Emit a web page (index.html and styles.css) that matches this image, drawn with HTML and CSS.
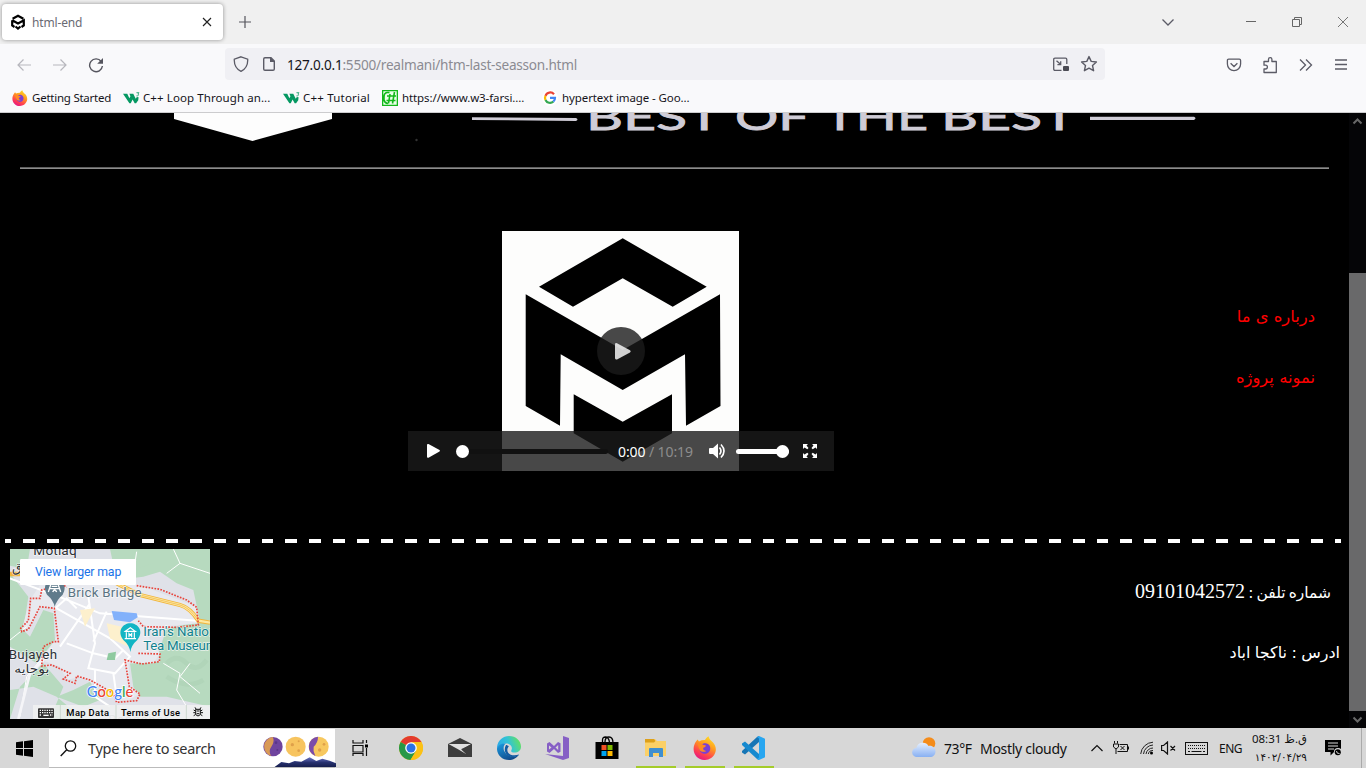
FILE: index.html
```html
<!DOCTYPE html>
<html lang="en">
<head>
<meta charset="utf-8">
<title>html-end</title>
<link rel="stylesheet" href="styles.css">
</head>
<body>
<svg width="0" height="0" class="defs">
  <defs>
    <linearGradient id="fx" x1="0.8" y1="0" x2="0.3" y2="1"><stop offset="0" stop-color="#ffe226"/><stop offset=".4" stop-color="#ff9a1f"/><stop offset=".75" stop-color="#ff4050"/><stop offset="1" stop-color="#e31587"/></linearGradient>
    <linearGradient id="edgeTop" x1="0" y1="0.6" x2="1" y2="0.3"><stop offset="0" stop-color="#2aa7e8"/><stop offset=".5" stop-color="#32c3d6"/><stop offset="1" stop-color="#66e25a"/></linearGradient>
    <linearGradient id="edgeLow" x1="0" y1="0" x2="0.6" y2="1"><stop offset="0" stop-color="#1b9de2"/><stop offset="1" stop-color="#114a8b"/></linearGradient>
    <linearGradient id="cloud" x1="0" y1="0" x2="0" y2="1"><stop offset="0" stop-color="#e4efff"/><stop offset="1" stop-color="#88b0f2"/></linearGradient>
    <linearGradient id="hills" x1="0" y1="0" x2="0" y2="1"><stop offset="0" stop-color="#6a74c4"/><stop offset=".5" stop-color="#27316f"/><stop offset="1" stop-color="#131b48"/></linearGradient>
    <symbol id="firefox" viewBox="0 0 24 24">
      <path d="M3 5.500 4.600 3.400 6 5.400C8 4.200 10 3.800 12 4 12.500 2.500 14 1 15.500.2 16 3 18 4.400 20 6.400 22.500 9 23.600 13 22.300 16.600 20.600 21.300 16.400 24 12 24 5.500 24.200.6 19.200.6 13 .6 10 1.600 7.500 3 5.500Z" fill="url(#fx)"/>
      <path d="M9 8.500c1.600-1.600 4.500-1.500 6.300-.2 2 1.500 2.600 4.500 1.400 6.700-1.300 2.400-4.300 3.500-6.900 2.400-2.700-1.100-3.900-3.700-3.200-6.500Z" fill="#7b3fd4"/>
      <path d="M4 7.200c2.800-.6 4.700.2 5.800 1.600l3.200.7c-.4 1.500-1.500 2-2.700 2.300-.6 1.800.9 3.200 3 3.100-2.300 1.700-6 1.200-7-1.700C5.500 11 5 9 4 7.200Z" fill="#ff8a22"/>
    </symbol>
    <symbol id="w3" viewBox="0 0 48 34">
      <path d="M0 5h12l6 13 3-6-3-7h11l7 14 3-5 5 1-1 8-6 9h-4l-6-11-5 11h-4Z" fill="#059862"/>
      <path d="M38 2h7l-3 4c3 0 3 6-4 5" fill="none" stroke="#059862" stroke-width="2.200"/>
    </symbol>
    <symbol id="cube" viewBox="524 237 198 226">
      <path d="M622.700 238.300 706.700 286.700 672.700 306.700 622.700 278.300 573 306.700 539 286.700ZM525.700 294.300 622.700 350 720 294.300 720.500 406 686 425.700 685 354.300 622.700 390 560.700 354.300 560 425.700 525.700 406ZM573.700 394.300 622.700 421.700 672 394.300V433.300L622.700 461.700 573.700 433.300Z"/>
    </symbol>
  </defs>
</svg>

<header class="tabs">
  <div class="tab">
    <svg class="favicon" width="14" height="16" viewBox="0 0 14 16"><path d="M1.600 4.700 7 1.700l5.400 3M1.200 6.300 7 9.500l5.800-3.200v5.200L10.500 13M1.200 6.300v5.200L3.500 13M4.500 12.500 7 14.500l2.500-2" fill="none" stroke="#000" stroke-width="2.200"/></svg>
    <span class="tab-title">html-end</span>
    <svg class="tab-close" width="10" height="10" viewBox="0 0 10 10"><path d="M1 1l8 8M9 1 1 9" stroke="#222" stroke-width="1.150"/></svg>
  </div>
  <svg class="plus" width="12" height="12" viewBox="0 0 12 12"><path d="M6 0v12M0 6h12" stroke="#55555d" stroke-width="1.200"/></svg>
  <svg class="tablist" width="14" height="14" viewBox="0 0 14 14"><path d="M1.500 4.500 7 10l5.500-5.500" fill="none" stroke="#5b5b66" stroke-width="1.300"/></svg>
  <div class="window-buttons">
    <svg width="10" height="10" viewBox="0 0 10 10"><path d="M0 4.500h10" stroke="#666"/></svg>
    <svg width="10" height="10" viewBox="0 0 10 10"><path d="M.5 2.500h7v7h-7zM2.500 2.500v-2h7v7h-2" fill="none" stroke="#666"/></svg>
    <svg width="10" height="10" viewBox="0 0 10 10"><path d="M0 0l10 10M10 0 0 10" stroke="#666" stroke-width=".9"/></svg>
  </div>
</header>

<nav class="toolbar">
  <div class="nav-buttons">
    <svg width="16" height="16" viewBox="0 0 16 16"><path d="M15 8H2M7.500 2.500 2 8l5.500 5.500" fill="none" stroke="#b7b7bd" stroke-width="1.200"/></svg>
    <svg width="16" height="16" viewBox="0 0 16 16"><path d="M1 8h13M8.500 2.500 14 8l-5.500 5.500" fill="none" stroke="#b7b7bd" stroke-width="1.200"/></svg>
    <svg width="16" height="16" viewBox="0 0 16 16"><path d="M13.200 4.500A6.400 6.400 0 1 0 14.400 9" fill="none" stroke="#55555e" stroke-width="1.400"/><path d="M15 1v5.800H9.200Z" fill="#55555e"/></svg>
  </div>
  <div class="urlbar">
    <svg width="16" height="16" viewBox="0 0 16 16"><path d="M8 .8 14.700 3.200C15 9 12.500 13 8 15.300 3.500 13 1 9 1.300 3.200Z" fill="none" stroke="#5b5b66" stroke-width="1.300"/></svg>
    <svg class="page-icon" width="14" height="16" viewBox="0 0 14 16"><path d="M3 1.700h6L12.300 5v8q0 1.300-1.300 1.300H3q-1.300 0-1.300-1.300V3Q1.700 1.700 3 1.700Z" fill="none" stroke="#5b5b66" stroke-width="1.400"/><path d="M8 1v5h5Z" fill="#5b5b66"/></svg>
    <span class="url"><b>127.0.0.1</b>:5500/realmani/htm-last-seasson.html</span>
    <svg class="pip" width="16" height="16" viewBox="0 0 16 16"><path d="M8.500 14.300H2q-1.300 0-1.300-1.300V3.500Q.7 2.200 2 2.200h10.500q1.300 0 1.300 1.300V8M3.500 4.700 7.500 8.300M7.700 5.300v3.300H4.400" fill="none" stroke="#5b5b66" stroke-width="1.300"/><rect x="10" y="10" width="6" height="5" rx="1" fill="#4b4b54"/></svg>
    <svg width="18" height="18" viewBox="0 0 18 18"><path d="M9 1.600 11.200 6.400 16.400 7 12.500 10.500 13.600 15.700 9 13.100 4.400 15.700 5.500 10.500 1.600 7 6.800 6.400Z" fill="none" stroke="#5b5b66" stroke-width="1.400" stroke-linejoin="round"/></svg>
  </div>
  <div class="tools">
    <svg width="16" height="16" viewBox="0 0 16 16"><path d="M2.700 2.200h10.600q1.300 0 1.300 1.300V7a6.600 6.600 0 0 1-13.200 0V3.500Q1.400 2.200 2.700 2.200ZM4.600 6.300 8 9.500l3.400-3.200" fill="none" stroke="#5b5b66" stroke-width="1.300"/></svg>
    <svg width="16" height="18" viewBox="0 0 16 18"><path d="M2 7V5.500h4.500V3.300a1.700 1.700 0 0 1 3.400 0v2.200h4.400v11H2V13h1.500a1.900 1.900 0 0 0 0-3.800H2Z" fill="none" stroke="#5b5b66" stroke-width="1.300" stroke-linejoin="round"/></svg>
    <svg width="16" height="16" viewBox="0 0 16 16"><path d="M2 2.500 7.500 8 2 13.500M8 2.500 13.500 8 8 13.500" fill="none" stroke="#5b5b66" stroke-width="1.300"/></svg>
    <svg width="14" height="14" viewBox="0 0 14 14"><path d="M1 2h12M1 6.500h12M1 11h12" stroke="#5b5b66" stroke-width="1.300"/></svg>
  </div>
</nav>

<div class="bookmarks">
  <a class="bm bm-start"><svg width="16" height="16"><use href="#firefox"/></svg><span>Getting Started</span></a>
  <a class="bm bm-loop"><svg width="17" height="16"><use href="#w3"/></svg><span>C++ Loop Through an...</span></a>
  <a class="bm bm-tut"><svg width="17" height="16"><use href="#w3"/></svg><span>C++ Tutorial</span></a>
  <a class="bm bm-farsi"><svg width="16" height="16" viewBox="0 0 16 16"><rect width="16" height="16" fill="#eaffe8"/><path d="M.5.5h15v15H.5ZM7.500 2.500H5Q2 3 2 7v3q.5 3 4 3.500M8 4 6.500 13.500M12.500 2l-2 11.500M5 6h9M4.500 10.500h9" fill="none" stroke="#12b81a" stroke-width="1.600"/></svg><span>https://www.w3-farsi....</span></a>
  <a class="bm bm-goo"><svg width="16" height="16" viewBox="0 0 16 16"><circle cx="8" cy="8" r="8" fill="#fff"/><g fill="none" stroke-width="2.200"><path d="M12 4.200A5 5 0 0 0 3.500 5.800" stroke="#ea4335"/><path d="M3.500 5.700a5 5 0 0 0 0 4.300" stroke="#fbbc05"/><path d="M3.500 10A5 5 0 0 0 11.300 11.700" stroke="#34a853"/><path d="M8 7.800h5a5 5 0 0 1-1.700 3.900" stroke="#4285f4"/></g></svg><span>hypertext image - Goo...</span></a>
</div>

<div class="view">
  <main class="page">
    <svg class="banner" width="1349" height="54" viewBox="0 113 1349 54">
      <path d="M174 105H332V119L252.500 141 174 119Z" fill="#fdfdfd"/>
      <path d="M472 117.300 576 118Q579 119.500 576 121L472 120ZM1090 116.800H1194Q1197 118.300 1194 120H1090Z" fill="#cfccd6"/>
      <g class="slogan">
        <text x="586" y="129.500" textLength="135" lengthAdjust="spacingAndGlyphs">BEST</text>
        <text x="735" y="129.500" textLength="74" lengthAdjust="spacingAndGlyphs">OF</text>
        <text x="824" y="129.500" textLength="104" lengthAdjust="spacingAndGlyphs">THE</text>
        <text x="941" y="129.500" textLength="135" lengthAdjust="spacingAndGlyphs">BEST</text>
      </g>
      <circle cx="416.500" cy="140" r="1.200" fill="#333"/>
    </svg>
    <hr class="rule">
    <section class="middle">
      <div class="player">
        <svg class="poster" width="426" height="240" viewBox="408 231 426 240">
          <rect x="502" y="231" width="237" height="240" fill="#fdfdfc"/>
          <use href="#cube" x="524" y="237" width="198" height="226"/>
        </svg>
        <div class="big-play"><svg width="48" height="48" viewBox="0 0 48 48"><path d="M18 17.500q0-2 2-1.300l13 7q1.500 1.100 0 2.200l-13 7q-2 .7-2-1.300Z" fill="#fff" fill-opacity=".8"/></svg></div>
        <div class="controls">
          <svg width="14" height="16" viewBox="0 0 14 16"><path d="M0 2q0-1.500 1.500-1L12.500 7q1 .8 0 1.600L1.500 14.700q-1.500.5-1.500-1Z" fill="#fff"/></svg>
          <div class="scrub"><i></i></div>
          <span class="time">0:00 <em>/ 10:19</em></span>
          <svg class="speaker" width="17" height="16" viewBox="0 0 17 16"><path d="M1 5h3l5-4.500v15L4 11H1Q0 11 0 10V6Q0 5 1 5Z" fill="#fff"/><path d="M10.500 4.500q3 3.500 0 7M12 1.500q6 6.500 0 13" fill="none" stroke="#fff" stroke-width="1.600"/></svg>
          <div class="volume"><i></i></div>
          <svg class="full" width="14" height="14" viewBox="0 0 14 14"><path d="M0 0h5L3.500 1.500 5.500 4 4.300 5.200 1.500 3.500 0 5ZM14 0v5l-1.500-1.500L9.700 5.200 8.500 4l2-2.500L9 0ZM0 14V9l1.500 1.500L4.300 8.800 5.500 10l-2 2.500L5 14ZM14 14H9l1.500-1.500-2-2.500L9.700 8.800l2.800 1.700L14 9Z" fill="#fff"/></svg>
        </div>
      </div>
      <div class="links" dir="rtl"><a>درباره ی ما</a><a class="second">نمونه پروژه</a></div>
    </section>
    <div class="dashes"></div>
    <footer class="foot">
      <svg class="map" width="200" height="170" viewBox="30 57 600 510">
        <rect x="30" y="57" width="600" height="510" fill="#b7dabf"/>
        <path d="M30 57H330L350 150 430 140 480 125 530 160 580 180 600 275 500 295 475 370 480 395 390 400 400 470 420 500 500 500 630 530V567H250L170 500 100 470 30 480V340L70 300 85 200 30 130ZM60 470 30 567H150L190 470 130 400Z" fill="#dfe1e8"/>
        <path d="M130 150 300 130 420 165 590 230 600 280 480 290 430 300 480 370 460 400 385 400 390 470 420 490 380 515 240 440 200 450 180 410 125 390 170 320 165 230 125 230 90 290 65 300 90 210Z" fill="#e8e9ef"/>
        <path d="M30 57h60l-10 60-50-10ZM30 200 80 215 60 290 90 320 130 240 160 250 165 330 110 400 30 350ZM220 480 270 455 300 510 250 530 170 500ZM480 410 620 390V480L540 470ZM330 57 400 120 460 100 500 57Z" fill="#b7dabf"/>
        <path d="M500 400q30-30 60 0t60-10M500 440q60 40 110 10" fill="none" stroke="#a8ceb2" stroke-width="14" opacity=".4"/>
        <g fill="none" stroke="#fff">
          <path d="M30 145 190 205 300 250 630 275M170 235 330 325 390 380 345 430 265 415 285 340 265 200M180 350 270 220M280 335 320 245M200 340 280 370 345 385 370 360M160 240 200 205 230 235M340 430 350 500M285 420V500L330 530" stroke-width="6"/>
          <path d="M410 65 400 130 340 110M520 57 540 100 630 130M540 100 500 130M490 400 540 430 530 480 560 530M570 400 540 440 600 490M30 330 80 290M60 560 80 440 130 380" stroke-width="3"/>
        </g>
        <path d="M55 567 90 430 130 390" fill="none" stroke="#f5f5f8" stroke-width="8"/>
        <path d="M240 240 285 235 255 290ZM320 280 365 290 385 350 330 325Z" fill="#fdf0cd"/>
        <path d="M335 243 410 250 413 262 390 277 342 270Z" fill="#82b1fb"/>
        <path d="M325 370 348 365 345 390 320 390Z" fill="#8fcaa0"/>
        <path d="M30 132H70M350 160 420 195 540 225Q570 233 595 272L630 278" fill="none" stroke="#f1b53c" stroke-width="13"/>
        <path d="M350 160 420 195 540 225Q570 233 595 272L630 278" fill="none" stroke="#fde8a0" stroke-width="7"/>
        <path d="M350 160 420 195 540 225Q570 233 595 272" fill="none" stroke="#edb243" stroke-width="2"/>
        <path d="M410 167 480 178 560 210 590 232 595 285 530 292 430 290 415 272M415 370 480 372 478 395 425 402 375 390 388 470 420 492 410 512 350 517 340 490 270 450 230 438 225 460 190 447 210 430 155 405 125 408 130 350 160 335 175 335 163 235 120 230 85 298 65 305 62 295 85 272 92 205 120 205 125 180 190 165 200 172" fill="none" stroke="#e8433b" stroke-width="5" stroke-dasharray="5 4"/>
        <path d="M164 230Q160 210 141 194C125 165 145 148 164 148S205 165 188 194Q170 210 164 230Z" fill="#607b8b"/>
        <path d="M145 186 152 165M182 186 175 165M148 176H180M155 169H172M158 186q6-12 12 0" fill="none" stroke="#fff" stroke-width="4"/>
        <path d="M391 366Q388 345 370 330C350 304 368 280 391 280S433 304 412 330Q394 345 391 366Z" fill="#12b5c4"/>
        <path d="M376 304 391 293 406 304ZM379 307V325M403 307V325M374 326H408M387 322V311L391 316 395 311V322" fill="none" stroke="#fff" stroke-width="3.500"/>
        <g class="map-label">
          <text x="100" y="76" font-size="41" textLength="130">Motlaq</text>
          <text x="36" y="127" font-size="38">ق</text>
          <text x="203" y="201" font-size="40" textLength="222" fill="#5a7382">Brick Bridge</text>
          <text x="430" y="318" font-size="40" textLength="219" fill="#12818e">Iran's Nation</text>
          <text x="430" y="360" font-size="40" textLength="222" fill="#12818e">Tea Museum</text>
          <text x="26" y="388" font-size="40" textLength="145">Bujayeh</text>
          <text class="fa" x="43" y="428" font-size="36" textLength="105" lengthAdjust="spacingAndGlyphs">بوجایه</text>
          <text x="325" y="583" font-size="38" fill="#999" textLength="180">Rongobar</text>
        </g>
        <text class="google" x="260" y="501" textLength="140" lengthAdjust="spacingAndGlyphs"><tspan fill="#4285f4">G</tspan><tspan fill="#ea4335">o</tspan><tspan fill="#fbbc05">o</tspan><tspan fill="#4285f4">g</tspan><tspan fill="#34a853">l</tspan><tspan fill="#ea4335">e</tspan></text>
        <path d="M99 525H630V567H99Z" fill="#f0f1f1" fill-opacity=".86"/>
        <path d="M181 525V567M348 525V567M559 525V567" stroke="#cdd8cf" stroke-width="3"/>
        <g class="map-legal"><text x="199" y="558" textLength="128">Map Data</text><text x="363" y="558" textLength="177">Terms of Use</text></g>
        <rect x="114" y="535" width="48" height="29" rx="3" fill="#333"/>
        <path d="M119 541H158M119 548H158M119 555H126M150 555H158" stroke="#fff" stroke-width="4" stroke-dasharray="4 3"/><path d="M130 556H146" stroke="#fff" stroke-width="4"/>
        <path d="M587 538h14v16l-7 4-7-4ZM581 540l5 3M607 540l-5 3M580 548h6M602 548h7M581 557l5-3M607 557l-5-3M588 537l-3-5M600 537l3-5M590 543h8M590 551h8" fill="none" stroke="#111" stroke-width="3"/>
        <rect x="60" y="87" width="348" height="78" rx="4" fill="#fff"/>
        <text class="larger" x="105" y="137" textLength="259">View larger map</text>
      </svg>
      <div class="contact" dir="rtl"><p class="phone">شماره تلفن : <span class="digits">09101042572</span></p><p class="address">ادرس : ناکجا اباد</p></div>
    </footer>
  </main>
  <aside class="scroll">
    <svg width="17" height="17" viewBox="0 0 17 17"><path d="M4.500 10.500 8.500 6.500l4 4" fill="none" stroke="#686868" stroke-width="2"/></svg>
    <div class="thumb"></div>
    <svg width="17" height="17" viewBox="0 0 17 17"><path d="M4.500 6.500 8.500 10.500l4-4" fill="none" stroke="#686868" stroke-width="2"/></svg>
  </aside>
</div>

<div class="taskbar">
  <div class="start"><svg width="17" height="17" viewBox="0 0 17 17"><path d="M0 2.300 7 1.300V8H0ZM8 1.200 17 0v8H8ZM0 9h7v6.700L0 14.700ZM8 9h9v8L8 15.800Z"/></svg></div>
  <div class="search">
    <svg width="17" height="17" viewBox="0 0 17 17"><circle cx="10.500" cy="6" r="5.200" fill="none" stroke="#111" stroke-width="1.300"/><path d="M6.700 9.800.7 16" stroke="#111" stroke-width="1.400"/></svg>
    <span>Type here to search</span>
    <svg class="moons" width="74" height="38" viewBox="787 9 222 114">
      <circle cx="820" cy="62" r="29" fill="#6f449e"/><path d="M820 33a29 29 0 0 0-5 57q-10-15 0-28t5-29Z" fill="#d99a56"/>
      <circle cx="888" cy="62" r="30" fill="#f7c45f"/><circle cx="957" cy="62" r="30" fill="#f7c85f"/><path d="M955 32a30 30 0 0 0-8 58q-8-14-5-28 13-12 13-30Z" fill="#7b4caa"/>
      <g fill="#dfa04a"><circle cx="878" cy="56" r="5"/><circle cx="897" cy="74" r="4"/><circle cx="897" cy="46" r="3"/><circle cx="960" cy="72" r="5"/><circle cx="973" cy="55" r="4"/></g><g fill="#5a3689"><circle cx="829" cy="50" r="4"/><circle cx="833" cy="72" r="3"/></g>
      <path d="M822 125 845 108 868 112 885 105 905 107 930 94 950 105 968 98 990 104 1009 112V125Z" fill="url(#hills)"/>
    </svg>
  </div>
  <div class="apps">
    <div class="app"><svg width="17" height="16" viewBox="0 0 17 16"><path d="M1 0v3h10V0M1 5.500h10v6.500H1zM1 16v-2.500h10V16M14.500 0v3M14.500 8v8" fill="none" stroke="#111" stroke-width="1.200"/><path d="M13 4.500h3v3h-3z"/></svg></div>
    <div class="app chrome"><svg width="24" height="24" viewBox="0 0 24 24"><circle cx="12" cy="12" r="12" fill="#fbc116"/><path d="M12 12 1.600 6A12 12 0 0 1 22.400 6Z" fill="#e33b2e"/><path d="M12 12 1.600 6A12 12 0 0 0 11.500 24l5.500-9Z" fill="#279847"/><path d="M12 6h10.400A12 12 0 0 1 11.500 24L17 15Z" fill="#fbc116"/><circle cx="12" cy="12" r="5.800" fill="#fff"/><circle cx="12" cy="12" r="4.500" fill="#2d72e5"/></svg></div>
    <div class="app"><svg width="24" height="20" viewBox="0 0 24 20"><path d="M0 6 12 0 24 6V19H0Z" fill="#3d3d3d"/><path d="M.5 6H23L16.500 10 18 16 10.500 11.500Z" fill="#e0e0e0"/><path d="M14.500 10.500 23 6.400 18 16 13.200 11.400Z" fill="#3d3d3d"/></svg></div>
    <div class="app"><svg width="24" height="24" viewBox="0 0 24 24"><path d="M0 11C1 4 6 0 12 0c7 0 12 5 12 10.500 0 4-3 6-6.500 6-2.500 0-4-.8-3-2.500C16 11 13 7.500 9 7.500 5 7.500 1 10 0 13Z" fill="url(#edgeTop)"/><path d="M0 12.500C1 9 5 7 9 7.500c-2 1-3 4-2 7 1.500 4 6 6.500 10 6 2-.3 4-1 5-2C20 22 16 24 12 24 5 24-.2 18.500 0 12.500Z" fill="url(#edgeLow)"/><path d="M9 9c-3 5-.5 12 7 12 3 0 5-1 6-2.500-4 1.500-9 1-11-2-1-2-1-4 .8-6C11 9.500 10 9 9 9Z" fill="#125ca3"/></svg></div>
    <div class="app"><svg width="25" height="24" viewBox="0 0 25 24"><path d="M18 0 24 2v20l-6 2L0 18l18 2Z" fill="#865fc5"/><path d="M2 7.500 4.500 6 9 10l4-4 2.500 1.300v8.400L13 17l-4-4-4.500 4L2 15.500ZM4 9.500v4L6.500 11.500ZM13.200 9 10.500 11.500 13.200 14Z" fill="#865fc5" fill-rule="evenodd"/></svg></div>
    <div class="app"><svg width="24" height="24" viewBox="0 0 24 24"><path d="M7.500 7V4q0-3 3-3t4 5M10 6q0-5 4-5t4 6" fill="none" stroke="#000" stroke-width="1.300"/><path d="M.5 6h23v17H.5Z"/><path d="M6.500 9h5v5h-5z" fill="#f25022"/><path d="M12.500 9h5v5h-5z" fill="#7fba00"/><path d="M6.500 15h5v5h-5z" fill="#00a4ef"/><path d="M12.500 15h5v5h-5z" fill="#ffb900"/></svg></div>
    <div class="app on"><svg width="22" height="20" viewBox="0 0 22 20"><path d="M0 1h10l2 2H21V18H0Z" fill="#fbd067"/><path d="M0 1h9l1.500 2L9 4.500H0Z" fill="#dda01b"/><path d="M4 19V11q0-1 1-1H17q1 0 1 1v8h-4v-4H8v4Z" fill="#3f8fd0"/></svg></div>
    <div class="app on"><svg width="24" height="24"><use href="#firefox"/></svg></div>
    <div class="app on"><svg width="25" height="24" viewBox="0 0 25 24"><path d="M18 0v6L4 18.500 1 16.500V15L16 1Z" fill="#1675b5"/><path d="M18 24v-6L4 5.500 1 7.500V9l15 14Z" fill="#1689cf"/><path d="M18 0 24 2.700V21.300L18 24l-2-1 2-1.500V2.500L16 1Z" fill="#28a6f0"/></svg></div>
  </div>
  <div class="tray">
    <svg class="weather" width="24" height="22" viewBox="0 0 24 22"><circle cx="17" cy="6.500" r="6.300" fill="#f48c1b"/><path d="M5 20a4.600 4.600 0 0 1-.5-9.200A6.500 6.500 0 0 1 16.500 9c3.500-.8 7 1.500 7 5.500 0 3.500-2.500 5.500-5.500 5.500Z" fill="url(#cloud)"/></svg>
    <span class="temp">73°F</span><span class="sky">Mostly cloudy</span>
    <svg class="up" width="14" height="10" viewBox="0 0 14 10"><path d="M1.500 8 7 2.500 12.500 8" fill="none" stroke="#111" stroke-width="1.200"/></svg>
    <svg class="battery" width="16" height="14" viewBox="0 0 16 14"><path d="M1.500 0v2.500M4.500 0v2.500M.5 3h5v3L3 8 .5 6ZM3 8v5M6.500 3.500h8v7h-10" fill="none" stroke="#111"/><path d="M15.500 5.500v3M7.500 5l4 4M11.500 5l-4 4" stroke="#111"/></svg>
    <svg class="wifi" width="14" height="14" viewBox="0 0 14 14"><g fill="none" stroke="#222" stroke-width="1"><path d="M.7 13A13 13 0 0 1 13 1.200M3.500 13A10 10 0 0 1 13 4M6 13A7 7 0 0 1 13 7M8.300 13A4.500 4.500 0 0 1 13 9.500"/></g><circle cx="11.500" cy="12" r="1.500"/></svg>
    <svg class="mute" width="15" height="14" viewBox="0 0 15 14"><path d="M.6 4.500h2L6.500 1v12L2.600 9.500h-2ZM9.500 5l4.500 4.500M14 5 9.500 9.500" fill="none" stroke="#111" stroke-width="1.200"/></svg>
    <svg class="keys" width="23" height="13" viewBox="0 0 23 13"><rect x=".5" y=".5" width="22" height="12" fill="none" stroke="#111"/><path d="M3 3.500h17M3 6.500h17" stroke="#111" stroke-dasharray="1 1"/><path d="M3 9.500h2M6.500 9.500h10M18 9.500h2" stroke="#111"/></svg>
    <span class="lang">ENG</span>
    <div class="clock"><span class="hour" dir="rtl">ق.ظ 08:31</span><span class="date">۱۴۰۲/۰۴/۲۹</span></div>
    <svg class="note" width="16" height="16" viewBox="0 0 16 16"><path d="M0 0h16v12H9l-3.500 3.500V12H0Z"/><path d="M3 3h10M3 6h10M3 9h6" stroke="#d7d7d7"/><circle cx="13" cy="12" r="4" fill="#d7d7d7"/><circle cx="12.800" cy="12.200" r="3"/><path d="M11.500 11q0 3 3 2.500" fill="none" stroke="#d7d7d7"/></svg>
    <i class="peek"></i>
  </div>
</div>
</body>
</html>
```
FILE: styles.css
```css
* { box-sizing: border-box; }
body { margin: 0; width: 1366px; height: 768px; overflow: hidden; display: flex; flex-direction: column; background: #000; font-family: "Noto Sans", "DejaVu Sans", sans-serif; color: #111; }
svg { display: block; flex: none; }
span { white-space: nowrap; }
.defs { position: absolute; }

.tabs { height: 44px; flex: none; background: #f0f0f0; display: flex; align-items: center; }
.tab { width: 221px; height: 36px; margin-left: 2px; padding: 0 11px 0 9px; background: #fff; border-radius: 4px; box-shadow: 0 0 4px rgba(0, 0, 0, .4); display: flex; align-items: center; }
.tab-title { margin-left: 7px; flex: 1; font-size: 12px; color: #6a6a73; letter-spacing: -.15px; }
.plus { margin-left: 16px; }
.tablist { margin-left: auto; }
.window-buttons { display: flex; gap: 36px; margin: 0 18px 0 71px; }

.toolbar { height: 42px; flex: none; background: #f9f9fb; display: flex; align-items: center; }
.nav-buttons { width: 225px; padding-left: 16px; display: flex; gap: 20px; }
.urlbar { width: 880px; height: 32px; padding: 0 7px 0 8px; margin-bottom: 2px; background: #f0f0f4; border-radius: 4px; display: flex; align-items: center; }
.page-icon { margin-left: 13px; }
.url { margin-left: 11px; flex: 1; font-size: 13.6px; color: #8b8b92; letter-spacing: -.24px; }
.url b { font-weight: 400; color: #15141a; }
.pip { margin-right: 11px; }
.tools { display: flex; align-items: center; gap: 20px; margin-left: 121px; }

.bookmarks { height: 27px; flex: none; padding: 0 0 2px 12px; background: #f9f9fb; border-bottom: 1px solid #ccccce; display: flex; align-items: center; font-size: 11.500px; color: #15141a; }
.bm { display: flex; align-items: center; gap: 4px; height: 16px; line-height: 14px; }
.bm span { letter-spacing: -.1px; }
.bm-start { width: 111px; }
.bm-start span { letter-spacing: -.24px; }
.bm-loop, .bm-tut { gap: 3px; }
.bm-loop { width: 160px; }
.bm-loop span { letter-spacing: .09px; }
.bm-tut { width: 99px; }
.bm-tut span { letter-spacing: .2px; }
.bm-farsi { width: 160px; }

.view { height: 615px; flex: none; display: flex; background: #000; }
.page { width: 1349px; }
.slogan { font: 400 36px Lato, "Open Sans", sans-serif; fill: #cfccd6; stroke: #cfccd6; stroke-width: .8; }
.rule { margin: 0 20px; height: 2px; border: 0; border-bottom: 1px solid #8c8c8c; border-top: 1px solid #5f5f5f; }
.middle { height: 370px; padding: 62px 34px 0 408px; display: flex; justify-content: space-between; }
.player { position: relative; width: 426px; height: 240px; }
.big-play { position: absolute; left: 189px; top: 96px; border-radius: 50%; background: rgba(26, 26, 26, .8); }
.controls { position: absolute; inset: auto 0 0 0; height: 40px; padding-left: 19px; background: rgba(26, 26, 26, .8); display: flex; align-items: center; }
.scrub { width: 151px; height: 5px; margin-left: 16px; background: #111; border-radius: 3px; display: flex; align-items: center; }
.scrub i, .volume i { width: 13px; height: 13px; border-radius: 50%; background: #fff; }
.scrub i { margin-left: -1px; }
.time { width: 77px; margin-left: 10px; font-size: 14px; color: #fff; letter-spacing: -.1px; }
.time em { font-style: normal; color: #8d8d8d; }
.speaker { margin-left: 14px; }
.volume { width: 53px; height: 5px; margin-left: 10px; background: #fff; border-radius: 3px; display: flex; align-items: center; justify-content: flex-end; }
.full { margin-left: 14px; }
.links { display: flex; flex-direction: column; padding-top: 74px; color: #f00; font: 16.400px/24px "DejaVu Sans", sans-serif; }
.second { margin-top: 37px; }
.dashes { height: 4px; width: 1336px; margin-left: 5px; background: repeating-linear-gradient(90deg, #fff 0 6px, #000 6px 18px, #fff 18px 23.857px); }
.foot { display: flex; justify-content: space-between; padding: 6px 9px 0 10px; }
.map-label { font-family: Roboto, sans-serif; fill: #2c3136; stroke: #fff; stroke-width: 4px; paint-order: stroke; stroke-opacity: .7; }
.fa { font-family: "DejaVu Sans", sans-serif; }
.google { font: 500 43px Lato, sans-serif; stroke: #fff; stroke-width: 4px; paint-order: stroke; }
.map-legal { font: 500 28px Roboto, sans-serif; fill: #000; }
.larger { font: 400 37px Roboto, sans-serif; fill: #1a73e8; }
.contact { color: #fff; font: 16px/24px "DejaVu Sans", sans-serif; }
.contact p { margin: 0; white-space: nowrap; }
.contact .phone { padding: 31px 9px 0 0; font-size: 15.500px; word-spacing: -1.800px; }
.contact .address { margin-top: 36px; word-spacing: -.7px; }
.digits { font: 20px "Liberation Serif", serif; }

.scroll { width: 17px; background: #050507; display: flex; flex-direction: column; }
.thumb { height: 438px; margin-top: auto; background: #69696a; }

.taskbar { height: 40px; flex: none; background: #d7d7d7; display: flex; }
.start { width: 49px; display: flex; align-items: center; justify-content: center; }
.search { width: 286px; height: 39px; margin-top: 1px; padding-left: 11px; background: #fff; border-bottom: 1px solid #bbb; display: flex; align-items: center; }
.search span { margin-left: 11px; flex: 1; font-size: 14.500px; color: #333; letter-spacing: -.3px; }
.moons { margin-right: -1px; }
.apps { display: flex; margin-left: 1px; }
.app { width: 49px; display: flex; align-items: center; justify-content: center; }
.chrome { margin-left: 1px; }
.on { background: linear-gradient(#a4cc2a, #a4cc2a) center bottom / 40px 2px no-repeat; }
.tray { flex: 1; display: flex; align-items: center; font-size: 14px; }
.weather { margin-left: 134px; }
.temp { width: 27px; margin-left: 8px; letter-spacing: -.4px; }
.sky { width: 87px; margin-left: 9px; letter-spacing: -.3px; }
.up { margin-left: 23px; }
.battery { margin-left: 9px; }
.wifi { margin-left: 11px; }
.mute { margin-left: 7px; }
.keys { margin-left: 9px; }
.lang { width: 23px; margin-left: 11px; font-size: 12px; letter-spacing: -.5px; }
.clock { width: 53px; margin-left: 12px; display: flex; flex-direction: column; align-items: flex-end; font-size: 11.500px; line-height: 18px; letter-spacing: -.6px; }
.date { font-family: "DejaVu Sans", sans-serif; font-size: 10.500px; letter-spacing: 0; }
.note { margin-left: 18px; }
.peek { width: 1px; height: 40px; margin-left: 20px; background: #aaa; }
```
